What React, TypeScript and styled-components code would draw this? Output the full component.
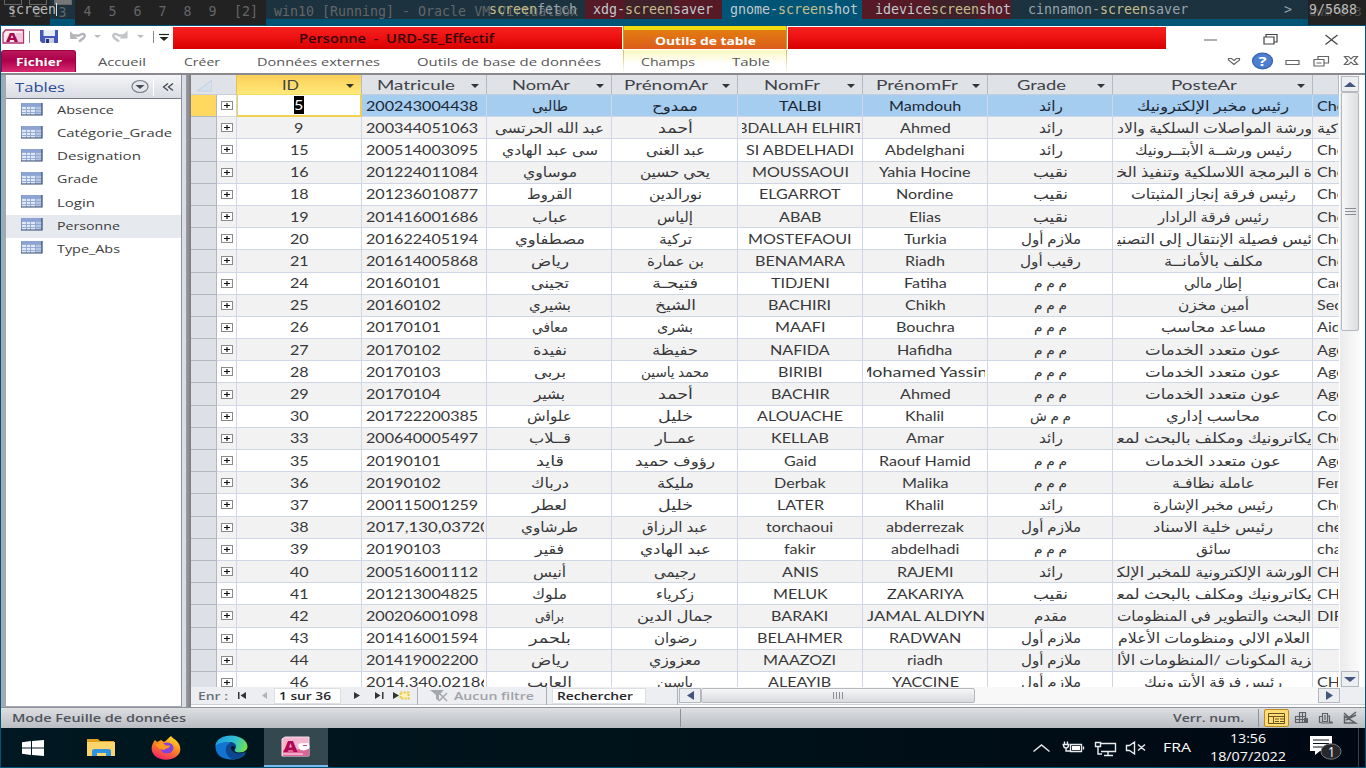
import React, { useLayoutEffect, useRef } from 'react';
import styled, { createGlobalStyle, css } from 'styled-components';

const Global = createGlobalStyle`
  * { box-sizing: border-box; }
  html, body { margin: 0; padding: 0; overflow: hidden; background: #005577; }
  svg { display: block; flex: none; }
`;

const ui = `"Open Sans", "Noto Sans", "DejaVu Sans", sans-serif`;
const sheet = `Lato, "DejaVu Sans", sans-serif`;
const mono = `"DejaVu Sans Mono", monospace`;

/* ---------- horizontally stretched text ---------- */
const StretchBox = styled.span`
  display: block;
  flex: none;
  white-space: pre;
`;
const StretchInner = styled.span`
  display: block;
  width: max-content;
  transform-origin: 0 50%;
`;
function Stretch({ w, k = 1.24, children, rtl }: { w?: number; k?: number; rtl?: boolean; children: React.ReactNode }) {
  const box = useRef<HTMLSpanElement>(null);
  const inner = useRef<HTMLSpanElement>(null);
  useLayoutEffect(() => {
    const i = inner.current!;
    i.style.transform = 'none';
    const natural = i.getBoundingClientRect().width;
    const width = w ?? natural * k;
    box.current!.style.width = `${width}px`;
    i.style.transform = `scaleX(${width / natural})`;
  }, [w, k, children]);
  return (
    <StretchBox ref={box}>
      <StretchInner ref={inner} dir={rtl ? 'rtl' : 'ltr'}>{children}</StretchInner>
    </StretchBox>
  );
}

/* ---------- window manager bar ---------- */
const Screen = styled.div`
  width: 1366px;
  height: 768px;
  display: flex;
  flex-direction: column;
  font-family: ${ui};
  overflow: hidden;
`;
const WmBar = styled.div`
  position: relative;
  height: 26px;
  flex: none;
  display: flex;
  background: linear-gradient(#222 0 25px, #005577 25px);
  font: 13.3px/24px ${mono};
  color: #626669;
  overflow: hidden;
`;
const shaded = 'linear-gradient(#1c323e 0 19px, #005577 19px)';
const Tag = styled.div<{ $on?: boolean; $used?: boolean }>`
  width: 25px;
  text-align: center;
  background: ${p => (p.$on ? shaded : 'transparent')};
  ${p => p.$used && css`
    &::before {
      content: '';
      display: block;
      width: 16px;
      height: 4px;
      margin: 0 0 -4px 4px;
      border: 1px solid #666;
      border-top: 0;
      background: ${p.$on ? '#777' : 'none'};
    }
  `}
`;
const Layout = styled.div`
  width: 41px;
  padding-left: 9px;
`;
const WmTitle = styled.div`
  width: 1042px;
  padding-left: 8px;
  background: ${shaded};
  white-space: pre;
`;
const WmStatus = styled.div`
  padding-left: 1px;
  font-size: 12.5px;
  color: #4c4c4c;
`;
const Menu = styled.div`
  position: absolute;
  inset: 0 0 auto 0;
  height: 19px;
  display: flex;
  line-height: 19px;
  color: #bbb;
`;
const MenuInput = styled.div`
  width: 266px;
  padding-left: 8px;
`;
const Caret = styled.span`
  display: inline-block;
  width: 1px;
  height: 13px;
  margin-left: 0;
  background: #ddd;
  vertical-align: -2px;
`;
const MenuItem = styled.div<{ $w: number; $kind?: 'out' | 'sel'; $pad?: number }>`
  width: ${p => p.$w}px;
  padding-left: ${p => p.$pad ?? 8}px;
  white-space: pre;
  background: ${p => (p.$kind === 'out' ? '#551a26' : p.$kind === 'sel' ? '#005577' : 'transparent')};
  color: ${p => (p.$kind ? '#c3c9cc' : '#98a4aa')};
`;
const Hit = styled.span<{ $dark?: boolean }>`
  display: inline-block;
  background: ${p => (p.$dark ? '#3f2129' : 'transparent')};
  color: #c6bd8c;
`;

/* ---------- application window ---------- */
const Win = styled.div`
  flex: 1;
  min-height: 0;
  margin: 0 1px 1px;
  display: flex;
  flex-direction: column;
  background: #fff;
`;
const TitleBar = styled.div`
  height: 24px;
  flex: none;
  display: flex;
  align-items: flex-start;
  padding-top: 1px;
`;
const Quick = styled.div`
  width: 172px;
  height: 22px;
  padding-left: 1px;
`;
const Red = styled.div<{ $w: number; $pad?: number }>`
  width: ${p => p.$w}px;
  height: 22px;
  padding-left: ${p => p.$pad ?? 0}px;
  background: linear-gradient(#f52020, #f01414 40%, #d80000);
  font: 600 12px/23px ${ui};
  color: #300;
`;
const ContextTitle = styled.div`
  width: 164px;
  height: 23px;
  margin: -1px 0 0 1px;
  padding-top: 2px;
  display: flex;
  justify-content: center;
  background: linear-gradient(#f0da10 0 4px, #e27c10 4px, #dc5c1c);
  border: solid #c9a21a;
  border-width: 0 1px;
  font: 700 11px/25px ${ui};
  color: #fff;
`;
const Caption = styled.div`
  flex: 1;
  display: flex;
  justify-content: flex-end;
`;
const Ribbon = styled.div`
  height: 23px;
  flex: none;
  display: flex;
  font: 500 11.5px/24px ${ui};
  color: #555;
`;
const FileTab = styled.div`
  width: 75px;
  height: 22px;
  display: flex;
  justify-content: center;
  border-radius: 3px 3px 0 0;
  border: 1px solid #a0003f;
  border-bottom: 0;
  background: linear-gradient(#b8185a, #ad004b 45%, #d82a70);
  color: #fff;
  font-weight: 700;
  font-size: 11px;
  line-height: 22px;
`;
const RibbonTab = styled.div<{ $gap: number }>`
  margin-left: ${p => p.$gap}px;
`;
const ContextTabs = styled.div`
  display: flex;
  width: 164px;
  margin-left: 22px;
  border: 1px solid;
  border-image: linear-gradient(#d2b84e, #fff) 1;
  border-width: 0 1px;
  background: linear-gradient(#fdf8c0, #fff 60%);
`;
const WinButtons = styled.div`
  margin-left: auto;
`;
const Body = styled.div`
  flex: 1;
  min-height: 0;
  display: flex;
  border-top: 2px solid #8b898d;
  background: #a2a8b4;
  padding-left: 5px;
`;

/* ---------- navigation pane ---------- */
const Pane = styled.div`
  width: 176px;
  display: flex;
  flex-direction: column;
  background: #fff;
  border-right: 1px solid #8d93a0;
  margin-bottom: 1px;
`;
const PaneHead = styled.div`
  height: 24px;
  display: flex;
  align-items: center;
  padding-left: 9px;
  background: linear-gradient(#f4f5f7, #d9dce2);
  border-bottom: 1px solid #757b85;
  font: 13px/22px ${ui};
  color: #2a4a9a;
`;
const NavItem = styled.div<{ $on?: boolean }>`
  height: 23.15px;
  display: flex;
  align-items: center;
  padding: 0 0 1px 15px;
  gap: 14px;
  background: ${p => (p.$on ? '#e6eaef' : 'transparent')};
  font: 500 11.5px/20px ${ui};
  color: #3c3c3c;
  & > svg { margin-top: -2px; }
`;
const Splitter = styled.div`
  width: 9px;
  background: linear-gradient(90deg, #d9dde5 0 4px, #9a9ca2 4px, #7d7d80);
`;

/* ---------- datasheet ---------- */
const Main = styled.div`
  flex: 1;
  display: flex;
  flex-direction: column;
  background: #fff;
`;
const Upper = styled.div`
  height: 612px;
  display: flex;
`;
const Grid = styled.div`
  width: 1148px;
  overflow: hidden;
`;
const colWidths = '26px 20px 125px 125px 125px 126px 125px 125px 125px 200px 26px';
const HeadRow = styled.div`
  display: grid;
  grid-template-columns: ${colWidths};
  height: 20px;
  background: #dfe2e7;
`;
const HeadCell = styled.div<{ $on?: boolean }>`
  display: flex;
  align-items: center;
  justify-content: center;
  border-right: 1px solid #b5b9c2;
  border-bottom: 1px solid ${p => (p.$on ? '#f4dc60' : '#c6cedb')};
  padding-right: 7px;
  font: 13.5px/18px ${sheet};
  color: #404247;
  background: ${p => (p.$on ? 'linear-gradient(#fdcf58, #ffe97a)' : 'none')};
  & > svg { margin-top: 3px; }
`;
const HeadLabel = styled.div`
  flex: 1;
  display: flex;
  justify-content: center;
  padding-right: 2px;
`;
const HeadCorner = styled(HeadCell)`
  grid-column: span 2;
  justify-content: flex-start;
  border-right-color: #e5c052;
  padding-left: 6px;
`;
const Row = styled.div<{ $alt?: boolean; $sel?: boolean }>`
  display: grid;
  grid-template-columns: ${colWidths};
  height: 22.19px;
  background: ${p => (p.$sel ? '#a5cdf0' : p.$alt ? '#f2f2f2' : '#fff')};
  color: ${p => (p.$sel ? '#1c2733' : '#38383a')};
  font: 13px/20px ${sheet};
`;
const Cell = styled.div<{ $left?: boolean; $last?: boolean; $ar?: boolean }>`
  display: flex;
  align-items: center;
  border: solid #cfd7e7;
  border-width: 0 ${p => (p.$last ? 0 : 1)}px 1px 0;
  padding: 0 ${p => (p.$ar || p.$last ? 1 : 2)}px 0 4px;
  min-width: 0;
  font-size: ${p => (p.$ar ? 14 : 13)}px;
`;
const Clip = styled.div<{ $left?: boolean; $shift?: boolean }>`
  flex: 1;
  min-width: 0;
  display: flex;
  overflow: hidden;
  padding-right: ${p => (p.$shift ? 2 : 0)}px;
  justify-content: ${p => (p.$left ? 'flex-start' : 'center')};
`;
const Selector = styled.div<{ $on?: boolean }>`
  background: ${p => (p.$on ? '#ffd860' : '#dde0e6')};
  border: solid #b2b7c0;
  border-width: 0 1px 1px 0;
`;
const Expand = styled.div<{ $on?: boolean }>`
  display: flex;
  align-items: center;
  justify-content: center;
  background: ${p => (p.$on ? '#fff' : 'inherit')};
  border: solid #cfd7e7;
  border-width: 0 1px 1px 0;
`;
const ActiveCell = styled.div`
  display: flex;
  align-items: center;
  justify-content: center;
  background: #fff;
  border: 1px solid #f0d050;
  border-width: 0 2px 2px 1px;
`;
const Picked = styled.span`
  background: #000;
  color: #fff;
  line-height: 18px;
`;
const VScroll = styled.div`
  width: 20px;
  margin-left: 1px;
  display: flex;
  flex-direction: column;
  padding: 1px 1px 0;
  background: linear-gradient(90deg, #ebebec, #fbfbfb);
`;
const ScrollButton = styled.div<{ $w: number; $h: number }>`
  width: ${p => p.$w}px;
  height: ${p => p.$h}px;
  flex: none;
  display: flex;
  align-items: center;
  justify-content: center;
  border: 1px solid #b4b8bf;
  background: #eceef1;
`;
const VThumb = styled(ScrollButton)`
  margin-bottom: auto;
  border-radius: 2px;
  background: linear-gradient(90deg, #f7f7f8, #dddee1);
`;
const HThumb = styled(ScrollButton)`
  margin-right: auto;
  border-radius: 2px;
  background: linear-gradient(#f7f7f8, #d9dade);
`;
const Lower = styled.div`
  height: 18px;
  display: flex;
  align-items: center;
  background: #eceef1;
  font: 600 11px/16px ${ui};
  color: #6a6e76;
  border-bottom: 1px solid #cdd0d5;
`;
const Navigator = styled.div`
  width: 488px;
  height: 17px;
  display: flex;
  align-items: center;
  padding-left: 7px;
`;
const Muted = styled.div`
  color: #a0a3a9;
`;
const RecordBox = styled.div<{ $w: number; $ml: number }>`
  width: ${p => p.$w}px;
  height: 16px;
  margin-left: ${p => p.$ml}px;
  padding-left: 4px;
  background: #fff;
  border: 1px solid #dcdfe3;
  color: #26262a;
  line-height: 14px;
`;
const Sep = styled.div<{ $ml: number; $h?: number; $c?: string }>`
  width: 1px;
  height: ${p => p.$h ?? 18}px;
  margin-left: ${p => p.$ml}px;
  background: ${p => p.$c ?? '#aab0b9'};
`;
const HScroll = styled.div`
  width: 661px;
  height: 17px;
  display: flex;
  align-items: center;
  background: #f8f8f9;
`;
const Space = styled.div<{ $w: number }>`
  width: ${p => p.$w}px;
  flex: none;
`;

/* ---------- status bar and taskbar ---------- */
const Status = styled.div`
  height: 21px;
  flex: none;
  display: flex;
  align-items: center;
  padding-left: 11px;
  background: linear-gradient(#dddfe2, #babdc2);
  border-top: 1px solid #8f9298;
  font: 600 11px/18px ${ui};
  color: #4f535a;
`;
const ViewOn = styled.div`
  width: 25px;
  height: 18px;
  margin-left: 5px;
  display: flex;
  align-items: center;
  justify-content: center;
  border: 1px solid #c08a20;
  border-radius: 2px;
  background: #ffdc74;
`;
const Taskbar = styled.div`
  height: 39px;
  flex: none;
  display: flex;
  align-items: center;
  background: linear-gradient(90deg, #001821, #001018 60%, #000813);
  color: #fff;
  font: 12px/18px ${ui};
`;
const TaskOn = styled.div`
  width: 64px;
  height: 39px;
  margin-left: 16px;
  display: flex;
  align-items: center;
  justify-content: center;
  background: #33484f;
  border-bottom: 2px solid #76b9ed;
`;
const Tray = styled.div`
  margin-left: auto;
  height: 39px;
  display: flex;
  align-items: center;
  padding-right: 6px;
`;
const Clock = styled.div`
  width: 76px;
  display: flex;
  flex-direction: column;
  align-items: center;
`;

/* ---------- drawings ---------- */
const TableIcon = () => (
  <svg width="22" height="13" viewBox="0 0 22 13">
    <rect x="0" y="0" width="21" height="12" fill="#dfe8f6" />
    <path d="M0 0h21v3H0z" fill="#8ba4d3" />
    <path d="M14 3h7v9h-7z" fill="#b4c5e4" />
    <path d="M0 3.500h21M0 6.500h21M0 9.500h21M5.500 0v12M9.500 0v12M14.500 0v12" stroke="#8fa6cf" strokeWidth="0.9" />
    <path d="M.5 0v12" stroke="#7e95c0" />
    <path d="M0 12h21.500M21 0v12.500" stroke="#33496f" strokeWidth="1.200" />
  </svg>
);
const Plus = () => (
  <svg width="12" height="9" viewBox="0 0 12 9">
    <rect x="0.5" y="0.5" width="11" height="8" fill="#fff" stroke="#8a8a8a" />
    <path d="M3 4.500h6M6 2v5" stroke="#111" strokeWidth="1.200" />
  </svg>
);
const Tri = ({ d, w = 8, h = 4, c = '#333' }: { d: 'u' | 'd' | 'l' | 'r'; w?: number; h?: number; c?: string }) => {
  const path = {
    u: `M0 ${h}L${w / 2} 0L${w} ${h}z`,
    d: `M0 0H${w}L${w / 2} ${h}z`,
    l: `M${w} 0V${h}L0 ${h / 2}z`,
    r: `M0 0L${w} ${h / 2}L0 ${h}z`,
  }[d];
  return <svg width={w} height={h}><path d={path} fill={c} /></svg>;
};
const QuickIcons = () => (
  <svg width="170" height="22" viewBox="2 27 170 22">
    <path d="M5.500 30h18v13H3V33z" fill="#fbe9f0" stroke="#b0336c" strokeWidth="1.300" />
    <path d="M16 33h6v9h-6z" fill="#f5c4d8" />
    <text x="6" y="41.500" fontFamily="Open Sans" fontWeight="800" fontSize="13" textLength="12" lengthAdjust="spacingAndGlyphs" fill="#a5094f">A</text>
    <path d="M29.500 31v12M153.500 31v12" stroke="#888" />
    <path d="M40 30h18v13H42l-2-2z" fill="#4358ba" />
    <path d="M43.500 30h11.500v6H43.500z" fill="#e6eefc" />
    <path d="M45 38h9v5h-9z" fill="#c8cde0" /><path d="M46 39h3v4h-3z" fill="#27357c" />
    <path d="M73 35.500h6c6-4 7 1 4 3l-4 3" fill="none" stroke="#b4b6ba" strokeWidth="2.500" />
    <path d="M70 31v8h8z" fill="#b4b6ba" />
    <path d="M94 35h7l-3.500 3z" fill="#bbb" />
    <path d="M125 35.500h-6c-6-4-7 1-4 3l4 3" fill="none" stroke="#c2c4c7" strokeWidth="2.500" />
    <path d="M127.500 30.500v8h-8z" fill="#c2c4c7" />
    <path d="M137 35h7l-3.500 3z" fill="#bbb" />
    <path d="M159 34.500h10" stroke="#222" strokeWidth="1.200" /><path d="M159.500 37h9l-4.500 4z" fill="#222" />
  </svg>
);
const CaptionIcons = () => (
  <svg width="170" height="23" viewBox="1195 27 170 23" fill="none" stroke="#444" strokeWidth="1.200">
    <path d="M1204 40h13" stroke="#777" />
    <path d="M1264 37h10v7h-10zM1266 37v-2.500h11V42h-3" />
    <path d="M1325.500 35l12 9.500M1337.500 35l-12 9.500" />
  </svg>
);
const DocIcons = () => (
  <svg width="145" height="22" viewBox="1220 50 145 22" fill="none" stroke="#666" strokeWidth="1.200">
    <path d="M1228.500 58.500h3l2.500 2 2.500-2h3v1.500l-5.500 4.500-5.500-4.500z" />
    <ellipse cx="1262.500" cy="61" rx="10" ry="7.800" fill="#4c7fd0" stroke="#3563b0" />
    <text x="1258.500" y="66" fill="#fff" stroke="none" fontFamily="Open Sans" fontWeight="700" fontSize="13" textLength="8" lengthAdjust="spacingAndGlyphs">?</text>
    <path d="M1286 60.500h13v4h-13z" />
    <path d="M1314 59.500h10v6.500h-10zM1318 59v-2.500h10.500v6.500h-4.500M1316.500 63h5" />
    <path d="M1344.500 56.500h4l2.500 2.500 2.500-2.500h4l-3.500 4 3.500 4h-4l-2.500-2.500-2.500 2.500h-4l3.500-4z" />
  </svg>
);
const AccessIcon = () => (
  <svg width="30" height="22" viewBox="0 0 30 22">
    <path d="M4 1h24v19H1V3z" fill="#f3b5cf" stroke="#f9dce8" />
    <path d="M2 14l26-1v7H2z" fill="#dd6699" />
    <path d="M2 18h20" stroke="#f5c3d7" strokeWidth="1.500" />
    <text x="2.500" y="15.500" fontFamily="Open Sans" fontWeight="800" fontSize="16" textLength="14" lengthAdjust="spacingAndGlyphs" fill="#b30655">A</text>
    <path d="M17 9c2-3 6-1 10-2 2 2 2 5 0 6-3 2-8 2-9-1z" fill="#fff" />
    <path d="M22 9.500h4" stroke="#d04c86" />
  </svg>
);
const StartIcon = () => (
  <svg width="22" height="16" viewBox="0 0 22 16" fill="#fff">
    <path d="M0 2.200L9 1v6.500H0zM10 .9L22 0v7.500H10zM0 8.500h9V15l-9-1.200zM10 8.500h12V16l-12-1z" />
  </svg>
);
const ExplorerIcon = () => (
  <svg width="30" height="19" viewBox="0 0 30 19">
    <path d="M1 1h11l2 2h14v15H1z" fill="#e3a01c" />
    <path d="M1 4h28v14H1z" fill="#fbd46b" />
    <path d="M6 18v-5q0-2 3-2h13q3 0 3 2v5h-5v-3h-9v3z" fill="#2f93e0" />
  </svg>
);
const FirefoxIcon = () => (
  <svg width="31" height="24" viewBox="0 0 31 24">
    <defs>
      <linearGradient id="ff" x1="0.8" y1="0" x2="0.3" y2="1">
        <stop offset="0" stopColor="#ffe226" /><stop offset="0.45" stopColor="#ff8a1e" /><stop offset="1" stopColor="#f0206a" />
      </linearGradient>
    </defs>
    <path d="M20 0c2 3 5 3 8 8 2 4 2 9-2 12-6 5-16 5-22 0-5-5-4-11 0-16l2 2 4-2 3 2c2-1 4-4 7-6z" fill="url(#ff)" />
    <ellipse cx="16" cy="12" rx="6.500" ry="5.500" fill="#8540e0" />
    <path d="M5 8c4-2 8-1 9 1 2 1 4 0 5 1-1 3-5 2-6 4-3-1-7-1-8-6z" fill="#ff9a20" />
  </svg>
);
const EdgeIcon = () => (
  <svg width="33" height="25" viewBox="0 0 33 25">
    <defs>
      <linearGradient id="ed" x1="0" y1="0.3" x2="1" y2="0.5">
        <stop offset="0" stopColor="#1a9fe0" /><stop offset="0.6" stopColor="#35c1d0" /><stop offset="1" stopColor="#6ee04c" />
      </linearGradient>
    </defs>
    <path d="M.5 12C.5 4 8 2 14 6l12 13c3 0 5-1 5-1-4 6-11 7-16 6.500C6 24 .5 19 .5 12z" fill="#1274d0" />
    <path d="M.5 11C1 4 8 .5 16 .5c9 0 16.500 5 16.500 11 0 4-4 6-8.500 6-4 0-5-1.500-4-3 3-5-2-8-7-7.500C7 7 2 9 .5 11z" fill="url(#ed)" />
    <path d="M11 13c1-4 4-6 7-5 3 1 4 4 2 6-1 2 1 4 5 4l6-1c-3 5-9 8-14 7-4-2-7-6-6-11z" fill="#0b4790" />
    <path d="M16 12c1-2 4-1 4 .5s-2 2.500 0 4 6 1.500 9 .5c-5 3-13 1-13-5z" fill="#001821" />
  </svg>
);
const TrayIcons = () => (
  <svg width="120" height="39" viewBox="1030 728 120 39" fill="none" stroke="#e8ecee" strokeWidth="1.400">
    <path d="M1033.500 751.500l8-6.500 8 6.500" />
    <path d="M1070.500 744.500h11v7h-11zM1083.500 746.500v3" /><path d="M1072 746h8v4h-8z" fill="#fff" stroke="none" />
    <path d="M1064.500 741.500v3M1067.500 741.500v3M1062.500 744.500h7M1063.500 745c0 4 5 4 5 0M1066 748v3h4" />
    <path d="M1101 743.500h14.500v8h-14.500M1108 752v3M1104 755.500h9M1095.500 742.500h5v4h-5zM1098 747v7h4" />
    <path d="M1126.500 745.500h3l5-3.500v12l-5-3.500h-3zM1138 744.500l7 6M1145 744.500l-7 6" />
  </svg>
);
const NoticeIcon = () => (
  <svg width="32" height="28" viewBox="0 0 32 28">
    <path d="M0 2h22v15H10l-5 4v-4H0z" fill="#fff" />
    <path d="M3 6h16M3 9.500h16M3 13h10" stroke="#0a1018" strokeWidth="1.200" />
    <ellipse cx="21" cy="17.500" rx="10" ry="7.700" fill="#26282c" stroke="#777" />
    <text x="18" y="22.500" fontFamily="Open Sans" fontSize="14" textLength="7" lengthAdjust="spacingAndGlyphs" fill="#fff">1</text>
  </svg>
);
const FormViews = () => (
  <svg width="70" height="14" viewBox="0 0 70 14" fill="none" stroke="#5d6166" strokeWidth="1.200">
    <path d="M5.500 1.500h6v10h-6zM8.500 1.500v10M1 5.500h11M1.500 5.500v6h5M1 8.500h11" /><path d="M10 7h4v5h-4z" fill="#5d6166" stroke="none" />
    <path d="M27.500 11.500h-2v-6h3v4M28.500 2.500h5v8h-5zM33.500 5h2v6h3M27 12h12M31 4v5" />
    <path d="M50 2l5 4.500L62 1M52 9l10-5M50.500 5v7h11z" strokeWidth="1.500" />
  </svg>
);

/* ---------- data ---------- */
type Ar = [string, number];
const MM: Ar = ['م م م', 33];
const RAED: Ar = ['رائد', 24];
const NAQIB: Ar = ['نقيب', 35];
const MULAZIM: Ar = ['ملازم أول', 60];
const AOUN: Ar = ['عون متعدد الخدمات', 136];
const rows: [string, string, Ar, Ar, string, string, Ar, Ar, string][] = [
  ['5', '200243004438', ['طالبى', 36], ['ممدوح', 46], 'TALBI', 'Mamdouh', RAED, ['رئيس مخبر الإلكترونيك', 152], 'Chef'],
  ['9', '200344051063', ['عبد الله الحرتسى', 109], ['أحمد', 35], 'ABDALLAH ELHIRTSI', 'Ahmed', RAED, ['ورشة المواصلات السلكية والاد', 195], 'كية'],
  ['15', '200514003095', ['سى عبد الهادي', 96], ['عبد الغنى', 59], 'SI ABDELHADI', 'Abdelghani', RAED, ['رئيس ورشــة الأبتــرونيك', 157], 'Chef'],
  ['16', '201224011084', ['موساوي', 54], ['يحي حسين', 70], 'MOUSSAOUI', 'Yahia Hocine', NAQIB, ['ة البرمجة اللاسلكية وتنفيذ الخ\u200d', 195], 'Chef'],
  ['18', '201236010877', ['القروط', 45], ['نورالدين', 53], 'ELGARROT', 'Nordine', NAQIB, ['رئيس فرقة إنجاز المثبتات', 165], 'Chef'],
  ['19', '201416001686', ['عباب', 36], ['إلياس', 36], 'ABAB', 'Elias', NAQIB, ['رئيس فرقة الرادار', 111], 'Chef'],
  ['20', '201622405194', ['مصطفاوي', 70], ['تركية', 33], 'MOSTEFAOUI', 'Turkia', MULAZIM, ['ئيس فصيلة الإنتقال إلى التصني\u200d', 195], 'Chef'],
  ['21', '201614005868', ['رياض', 38], ['بن عمارة', 57], 'BENAMARA', 'Riadh', ['رقيب أول', 61], ['مكلف بالأمانــة', 99], 'Chef'],
  ['24', '20160101', ['تجينى', 38], ['فتيحـة', 46], 'TIDJENI', 'Fatiha', MM, ['إطار مالي', 58], 'Cadre'],
  ['25', '20160102', ['بشيري', 42], ['الشيخ', 41], 'BACHIRI', 'Chikh', MM, ['أمين مخزن', 71], 'Secr'],
  ['26', '20170101', ['معافي', 36], ['بشرى', 36], 'MAAFI', 'Bouchra', MM, ['مساعد محاسب', 105], 'Aide'],
  ['27', '20170102', ['نفيدة', 34], ['حفيظة', 46], 'NAFIDA', 'Hafidha', MM, AOUN, 'Agent'],
  ['28', '20170103', ['بربى', 32], ['محمد ياسين', 68], 'BIRIBI', 'Mohamed Yassine', MM, AOUN, 'Agent'],
  ['29', '20170104', ['بشير', 31], ['أحمد', 35], 'BACHIR', 'Ahmed', MM, AOUN, 'Agent'],
  ['30', '201722200385', ['علواش', 45], ['خليل', 35], 'ALOUACHE', 'Khalil', ['م م ش', 41], ['محاسب إداري', 94], 'Com'],
  ['33', '200640005497', ['قــلاب', 42], ['عمــار', 41], 'KELLAB', 'Amar', RAED, ['يكاترونيك ومكلف بالبحث لمع\u200d', 195], 'Chef'],
  ['35', '20190101', ['قايد', 28], ['رؤوف حميد', 80], 'Gaid', 'Raouf Hamid', MM, AOUN, 'Agent'],
  ['36', '20190102', ['درباك', 38], ['مليكة', 37], 'Derbak', 'Malika', MM, ['عاملة نظافـة', 83], 'Fem'],
  ['37', '200115001259', ['لعطر', 35], ['خليل', 35], 'LATER', 'Khalil', RAED, ['رئيس مخبر الإشارة', 120], 'Chef'],
  ['38', '2017,130,03720', ['طرشاوي', 57], ['عبد الرزاق', 66], 'torchaoui', 'abderrezak', MULAZIM, ['رئيس خلية الاسناد', 120], 'chef'],
  ['39', '20190103', ['فقير', 29], ['عبد الهادي', 71], 'fakir', 'abdelhadi', MM, ['سائق', 35], 'chau'],
  ['40', '200516001112', ['أنيس', 33], ['رجيمى', 42], 'ANIS', 'RAJEMI', RAED, ['الورشة الإلكترونية للمخبر الإلك\u200d', 195], 'CHE'],
  ['41', '201213004825', ['ملوك', 35], ['زكرياء', 38], 'MELUK', 'ZAKARIYA', NAQIB, ['يكاترونيك ومكلف بالبحث لمع\u200d', 195], 'CHE'],
  ['42', '200206001098', ['براقى', 29], ['جمال الدين', 76], 'BARAKI', 'JAMAL ALDIYN', ['مقدم', 33], ['البحث والتطوير في المنظومات', 194], 'DIR'],
  ['43', '201416001594', ['بلحمر', 42], ['رضوان', 43], 'BELAHMER', 'RADWAN', MULAZIM, ['العلام الالي ومنظومات الأعلام', 192], ''],
  ['44', '201419002200', ['رياض', 38], ['معزوزي', 52], 'MAAZOZI', 'riadh', MULAZIM, ['\u200dزية المكونات /المنظومات الأا', 195], ''],
  ['46', '2014.340.02186', ['العايب', 45], ['ياسين', 36], 'ALEAYIB', 'YACCINE', MULAZIM, ['رئيس فرقة الأبترونيك', 138], 'CHE'],
];
const heads: [string, number][] = [['ID', 17], ['Matricule', 78], ['NomAr', 58], ['PrénomAr', 84], ['NomFr', 56], ['PrénomFr', 82], ['Grade', 49], ['PosteAr', 66]];
const navItems: [string, number][] = [['Absence', 57], ['Catégorie_Grade', 115], ['Designation', 84], ['Grade', 41], ['Login', 38], ['Personne', 63], ['Type_Abs', 63]];

/* a long first name is drawn wider than its column and is clipped on both sides */
const wide: Record<string, number> = { 'Mohamed Yassine': 141, 'ABDALLAH ELHIRTSI': 149, 'JAMAL ALDIYN': 118, '2017,130,03720': 124, '2014.340.02186': 124 };

const ArCell = ({ v }: { v: Ar }) => (
  <Cell $ar><Clip $shift={v[1] < 190}><Stretch w={v[1]} rtl>{v[0]}</Stretch></Clip></Cell>
);
const FrCell = ({ v, left, last }: { v: string; left?: boolean; last?: boolean }) => (
  <Cell $left={left} $last={last}><Clip $left={left} $shift={!left && !wide[v]}><Stretch w={wide[v]}>{v}</Stretch></Clip></Cell>
);

export default function App() {
  return (
    <Screen>
      <Global />
      <WmBar>
        {[1, 2, 3, 4, 5, 6, 7, 8, 9].map(n => <Tag key={n} $on={n === 3} $used={n < 4}>{n}</Tag>)}
        <Layout>[2]</Layout>
        <WmTitle>win10 [Running] - Oracle VM VirtualBox</WmTitle>
        <WmStatus>dwm-6.3</WmStatus>
        <Menu>
          <MenuInput>screen<Caret /></MenuInput>
          <MenuItem $w={319} $pad={223}><Hit>screen</Hit>fetch</MenuItem>
          <MenuItem $w={137} $kind="out">xdg-<Hit $dark>screen</Hit>saver</MenuItem>
          <MenuItem $w={140} $kind="sel">gnome-<Hit>screen</Hit>shot</MenuItem>
          <MenuItem $w={149} $kind="out" $pad={13}>idevice<Hit $dark>screen</Hit>shot</MenuItem>
          <MenuItem $w={265} $pad={17}>cinnamon-<Hit>screen</Hit>saver</MenuItem>
          <MenuItem $w={33}>&gt;</MenuItem>
          <div>9/5688</div>
        </Menu>
      </WmBar>
      <Win>
        <TitleBar>
          <Quick><QuickIcons /></Quick>
          <Red $w={449} $pad={126}><Stretch w={195}>Personne  -  URD-SE_Effectif</Stretch></Red>
          <ContextTitle><Stretch w={101}>Outils de table</Stretch></ContextTitle>
          <Space $w={1} />
          <Red $w={378} />
          <Caption><CaptionIcons /></Caption>
        </TitleBar>
        <Ribbon>
          <FileTab><Stretch w={46}>Fichier</Stretch></FileTab>
          <RibbonTab $gap={22}><Stretch w={48}>Accueil</Stretch></RibbonTab>
          <RibbonTab $gap={38}><Stretch w={36}>Créer</Stretch></RibbonTab>
          <RibbonTab $gap={37}><Stretch w={123}>Données externes</Stretch></RibbonTab>
          <RibbonTab $gap={37}><Stretch w={184}>Outils de base de données</Stretch></RibbonTab>
          <ContextTabs>
            <RibbonTab $gap={17}><Stretch w={54}>Champs</Stretch></RibbonTab>
            <RibbonTab $gap={37}><Stretch w={38}>Table</Stretch></RibbonTab>
          </ContextTabs>
          <WinButtons><DocIcons /></WinButtons>
        </Ribbon>
        <Body>
          <Pane>
            <PaneHead>
              <Stretch w={50}>Tables</Stretch>
              <Space $w={66} />
              <svg width="54" height="22" viewBox="0 0 54 22">
                <ellipse cx="9" cy="10.500" rx="8" ry="6" fill="#e4e6ea" stroke="#777d87" strokeWidth="1.200" />
                <path d="M4.500 9h9l-4.500 4z" fill="#444a55" />
                <path d="M22.500 3v17" stroke="#fff" />
                <path d="M37 7.500l-4.500 3.500 4.500 3.500M42 7.500l-4.500 3.500 4.500 3.500" fill="none" stroke="#444a55" strokeWidth="1.300" />
              </svg>
            </PaneHead>
            {navItems.map(([t, w]) => (
              <NavItem key={t} $on={t === 'Personne'}><TableIcon /><Stretch w={w}>{t}</Stretch></NavItem>
            ))}
          </Pane>
          <Splitter />
          <Main>
            <Upper>
              <Grid>
                <HeadRow>
                  <HeadCorner><svg width="15" height="12"><path d="M15 0v11H0z" fill="#d5e0ec" stroke="#c2d0e0" /></svg></HeadCorner>
                  {heads.map(([t, w]) => (
                    <HeadCell key={t} $on={t === 'ID'}>
                      <HeadLabel><Stretch w={w}>{t}</Stretch></HeadLabel>
                      <Tri d="d" w={8} h={4} />
                    </HeadCell>
                  ))}
                  <HeadCell />
                </HeadRow>
                {rows.map(([id, mat, na, pa, nf, pf, g, po, fr], i) => (
                  <Row key={id} $alt={i % 2 === 1} $sel={i === 0}>
                    <Selector $on={i === 0} />
                    <Expand $on={i === 0}><Plus /></Expand>
                    {i === 0 ? <ActiveCell><Picked><Stretch>{id}</Stretch></Picked></ActiveCell> : <FrCell v={id} />}
                    <FrCell v={mat} left />
                    <ArCell v={na} />
                    <ArCell v={pa} />
                    <FrCell v={nf} />
                    <FrCell v={pf} />
                    <ArCell v={g} />
                    <ArCell v={po} />
                    <FrCell v={fr} left last />
                  </Row>
                ))}
              </Grid>
              <VScroll>
                <ScrollButton $w={18} $h={16}><Tri d="u" w={12} h={5} c="#44557f" /></ScrollButton>
                <VThumb $w={18} $h={239}>
                  <svg width="11" height="8"><path d="M0 .5h11M0 3.500h11M0 6.500h11" stroke="#8b8d92" /></svg>
                </VThumb>
                <ScrollButton $w={18} $h={16}><Tri d="d" w={12} h={5} c="#44557f" /></ScrollButton>
              </VScroll>
            </Upper>
            <Lower>
              <Navigator>
                <Stretch w={30}>Enr :</Stretch>
                <Space $w={9} />
                <svg width="32" height="10" viewBox="0 0 32 10"><path d="M1 1h1.500v7H1zM9 1v7L3.500 4.500z" fill="#333" /><path d="M30 1v7l-5-3.500z" fill="#b0b3b8" /></svg>
                <RecordBox $w={67} $ml={5}><Stretch w={52}>1 sur 36</Stretch></RecordBox>
                <Space $w={12} />
                <svg width="60" height="10" viewBox="0 0 60 10">
                  <path d="M1 1v7l6-3.500zM22 1v7l5.500-3.500zM29 1h1.500v7H29zM40 1v7l6-3.500z" fill="#333" />
                  <path d="M47.500 1.500h8v6h-8z" fill="#fff3b8" stroke="#ecc840" strokeWidth="2" strokeDasharray="2 1.200" />
                </svg>
                <Sep $ml={4} />
                <Space $w={12} />
                <svg width="18" height="13" viewBox="0 0 18 13"><path d="M0 1h14L9 6v6l-3-2V6z" fill="#a5a8ad" /><path d="M9 4l8 8M17 4l-8 8" stroke="#a5a8ad" strokeWidth="1.600" /></svg>
                <Space $w={6} />
                <Muted><Stretch w={80}>Aucun filtre</Stretch></Muted>
                <Sep $ml={12} />
                <RecordBox $w={94} $ml={5}><Stretch w={76}>Rechercher</Stretch></RecordBox>
                <Sep $ml={31} />
              </Navigator>
              <HScroll>
                <ScrollButton $w={22} $h={15}><Tri d="l" w={7} h={9} c="#44557f" /></ScrollButton>
                <HThumb $w={274} $h={15}><svg width="11" height="7"><path d="M.5 0v7M3.500 0v7M6.500 0v7M9.500 0v7" stroke="#8b8d92" /></svg></HThumb>
                <ScrollButton $w={22} $h={15}><Tri d="r" w={7} h={9} c="#44557f" /></ScrollButton>
              </HScroll>
            </Lower>
          </Main>
        </Body>
        <Status>
          <Stretch w={174}>Mode Feuille de données</Stretch>
          <Sep $ml={494} $c="#8d9198" />
          <Space $w={492} />
          <Stretch w={71}>Verr. num.</Stretch>
          <Sep $ml={14} $c="#8d9198" />
          <ViewOn><svg width="17" height="11"><path d="M.5.5h16v10H.5zM.5 3.500h16M5.500 3.500v7M7 6h4M12 6h4M7 8.500h4M12 8.500h4" stroke="#6b5320" fill="none" /></svg></ViewOn>
          <Space $w={5} />
          <FormViews />
        </Status>
        <Taskbar>
          <Space $w={21} /><StartIcon />
          <Space $w={42} /><ExplorerIcon />
          <Space $w={35} /><FirefoxIcon />
          <Space $w={33} /><EdgeIcon />
          <TaskOn><AccessIcon /></TaskOn>
          <Tray>
            <TrayIcons />
            <Space $w={13} />
            <Stretch w={28}>FRA</Stretch>
            <Space $w={19} />
            <Clock><Stretch w={36}>13:56</Stretch><Stretch w={76}>18/07/2022</Stretch></Clock>
            <Space $w={24} />
            <NoticeIcon />
            <Sep $ml={16} $h={39} $c="#38414a" />
          </Tray>
        </Taskbar>
      </Win>
    </Screen>
  );
}
